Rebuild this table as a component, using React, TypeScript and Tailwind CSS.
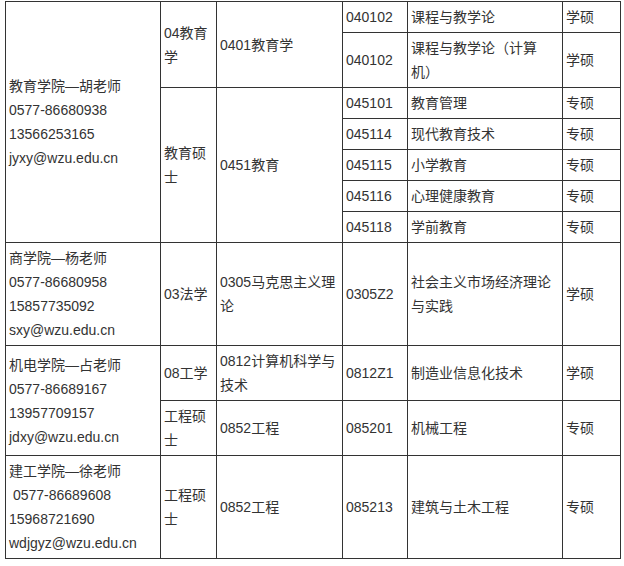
import React from "react";

const td = "border border-[#333] px-[3px] py-[3px] align-middle text-left";

function Info({ lines }: { lines: string[] }) {
  return (
    <>
      {lines.map((l, i) => (
        <div key={i} className="whitespace-pre">{l}</div>
      ))}
    </>
  );
}

export default function App() {
  return (
    <div className="w-[624px] h-[566px] bg-white pt-[1px] pl-[5px]">
      <table
        className="table-fixed border-collapse w-[615px] text-[14px] leading-[24px] text-[#333]"
        style={{ fontFamily: '"Liberation Sans", "Noto Sans CJK SC", sans-serif' }}
      >
        <colgroup>
          <col className="w-[155px]" />
          <col className="w-[56px]" />
          <col className="w-[126px]" />
          <col className="w-[65px]" />
          <col className="w-[155px]" />
          <col className="w-[58px]" />
        </colgroup>
        <tbody>
          <tr>
            <td rowSpan={7} className={td}>
              <Info lines={["教育学院—胡老师", "0577-86680938", "13566253165", "jyxy@wzu.edu.cn"]} />
            </td>
            <td rowSpan={2} className={td}>04教育学</td>
            <td rowSpan={2} className={td}>0401教育学</td>
            <td className={td}>040102</td>
            <td className={td}>课程与教学论</td>
            <td className={td}>学硕</td>
          </tr>
          <tr>
            <td className={td}>040102</td>
            <td className={td}>
              课程与教学论<span className="inline-block w-[14px] text-center">（</span>计算
              <br />
              机<span className="inline-block w-[14px] text-center">）</span>
            </td>
            <td className={td}>学硕</td>
          </tr>
          <tr>
            <td rowSpan={5} className={td}>教育硕士</td>
            <td rowSpan={5} className={td}>0451教育</td>
            <td className={td}>045101</td>
            <td className={td}>教育管理</td>
            <td className={td}>专硕</td>
          </tr>
          <tr>
            <td className={td}>045114</td>
            <td className={td}>现代教育技术</td>
            <td className={td}>专硕</td>
          </tr>
          <tr>
            <td className={td}>045115</td>
            <td className={td}>小学教育</td>
            <td className={td}>专硕</td>
          </tr>
          <tr>
            <td className={td}>045116</td>
            <td className={td}>心理健康教育</td>
            <td className={td}>专硕</td>
          </tr>
          <tr>
            <td className={td}>045118</td>
            <td className={td}>学前教育</td>
            <td className={td}>专硕</td>
          </tr>
          <tr>
            <td className={td}>
              <Info lines={["商学院—杨老师", "0577-86680958", "15857735092", "sxy@wzu.edu.cn"]} />
            </td>
            <td className={td}>03法学</td>
            <td className={td}>0305马克思主义理论</td>
            <td className={td}>0305Z2</td>
            <td className={td}>社会主义市场经济理论与实践</td>
            <td className={td}>学硕</td>
          </tr>
          <tr>
            <td rowSpan={2} className={td}>
              <Info lines={["机电学院—占老师", "0577-86689167", "13957709157", "jdxy@wzu.edu.cn"]} />
            </td>
            <td className={td}>08工学</td>
            <td className={td}>0812计算机科学与技术</td>
            <td className={td}>0812Z1</td>
            <td className={td}>制造业信息化技术</td>
            <td className={td}>学硕</td>
          </tr>
          <tr>
            <td className={td}>工程硕士</td>
            <td className={td}>0852工程</td>
            <td className={td}>085201</td>
            <td className={td}>机械工程</td>
            <td className={td}>专硕</td>
          </tr>
          <tr>
            <td className={td}>
              <Info lines={["建工学院—徐老师", " 0577-86689608", "15968721690", "wdjgyz@wzu.edu.cn"]} />
            </td>
            <td className={td}>工程硕士</td>
            <td className={td}>0852工程</td>
            <td className={td}>085213</td>
            <td className={td}>建筑与土木工程</td>
            <td className={td}>专硕</td>
          </tr>
        </tbody>
      </table>
    </div>
  );
}
